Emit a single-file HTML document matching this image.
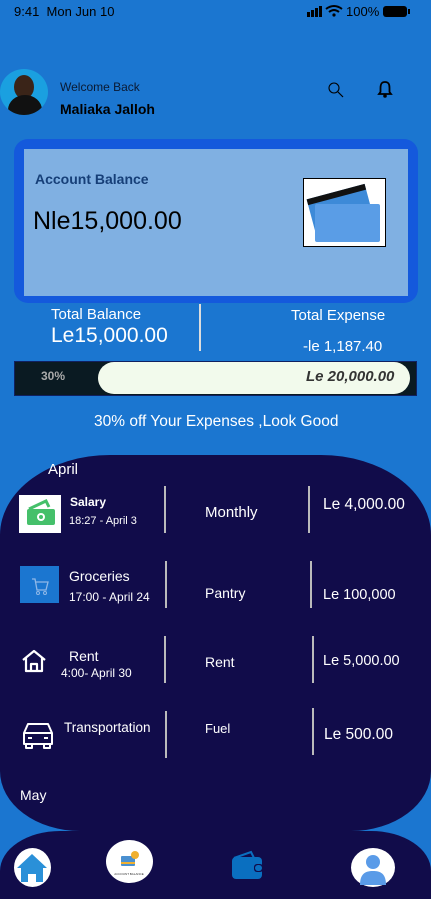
<!DOCTYPE html>
<html><head><meta charset="utf-8"><style>
*{margin:0;padding:0;box-sizing:border-box}
body{width:431px;height:899px;overflow:hidden;background:#1b76d0;font-family:"Liberation Sans",sans-serif;position:relative;color:#fff}
.a{position:absolute;white-space:nowrap}
.vl{position:absolute;width:2px;background:#bbb}
</style></head><body>
<div class="a" style="left:14px;top:4px;font-size:13px;color:#000">9:41&nbsp;&nbsp;Mon Jun 10</div>
<div class="a" style="left:307px;top:3px;width:105px;height:16px">
 <svg width="105" height="16"><rect x="0" y="9" width="3" height="5" fill="#000"/><rect x="4" y="7" width="3" height="7" fill="#000"/><rect x="8" y="5" width="3" height="9" fill="#000"/><rect x="12" y="3" width="3" height="11" fill="#000"/>
 <path d="M19 6 Q27 0 35 6 M22 9 Q27 5 32 9" stroke="#000" stroke-width="2" fill="none"/><circle cx="27" cy="12" r="1.6" fill="#000"/>
 <text x="39" y="13" font-size="13" font-family="Liberation Sans">100%</text>
 <rect x="76" y="3" width="24" height="11" rx="3" fill="#000"/><rect x="101" y="6" width="2" height="5" fill="#000"/></svg>
</div>
<div class="a" style="left:0;top:69px;width:48px;height:46px;border-radius:50%;background:#1aa0e0;overflow:hidden">
 <div style="position:absolute;left:14px;top:6px;width:20px;height:24px;border-radius:50%;background:#3a2418"></div>
 <div style="position:absolute;left:8px;top:26px;width:34px;height:30px;border-radius:50% 50% 0 0;background:#111"></div>
</div>
<div class="a" style="left:60px;top:80px;font-size:12px;color:#0a1a33">Welcome Back</div>
<div class="a" style="left:60px;top:101px;font-size:14px;font-weight:bold;color:#000">Maliaka Jalloh</div>
<svg class="a" style="left:327px;top:81px" width="18" height="18"><circle cx="7" cy="7" r="5" stroke="#000" stroke-width="1.1" fill="none"/><path d="M11 11 L16 16" stroke="#000" stroke-width="1.2"/></svg>
<svg class="a" style="left:377px;top:80px" width="16" height="19"><path d="M8 2 C4 2 3.5 5 3.5 8 L3.5 12 L2 14 L14 14 L12.5 12 L12.5 8 C12.5 5 12 2 8 2Z" stroke="#000" stroke-width="1.8" fill="none"/><circle cx="8" cy="16" r="1.8" fill="#000"/></svg>

<div class="a" style="left:14px;top:139px;width:404px;height:164px;border-radius:14px;background:#1459dc"></div>
<div class="a" style="left:24px;top:149px;width:384px;height:147px;background:#80b0e2"></div>
<div class="a" style="left:35px;top:171px;font-size:14px;font-weight:bold;color:#163f78">Account Balance</div>
<div class="a" style="left:33px;top:207px;font-size:25px;color:#000">Nle15,000.00</div>
<div class="a" style="left:303px;top:178px;width:83px;height:69px;background:#fff;border:1px solid #000">
 <div style="position:absolute;left:6px;top:12px;width:60px;height:34px;background:#3d8ad8;transform:rotate(-15deg);border-top:6px solid #111"></div>
 <div style="position:absolute;left:11px;top:25px;width:65px;height:38px;background:#5a9de6;border-radius:2px"></div>
</div>

<div class="a" style="left:51px;top:306px;font-size:15px">Total Balance</div>
<div class="a" style="left:51px;top:324px;font-size:21px">Le15,000.00</div>
<div class="vl" style="left:199px;top:304px;height:47px;background:#ddd"></div>
<div class="a" style="left:291px;top:307px;font-size:15px">Total Expense</div>
<div class="a" style="left:303px;top:338px;font-size:15px">-le 1,187.40</div>

<div class="a" style="left:14px;top:361px;width:403px;height:35px;background:#0a1a22;border:1px solid #102060"></div>
<div class="a" style="left:41px;top:369px;font-size:12px;font-weight:bold;color:#aaa">30%</div>
<div class="a" style="left:98px;top:362px;width:312px;height:32px;border-radius:16px;background:#f2faec"></div>
<div class="a" style="left:306px;top:368px;font-size:15px;font-weight:bold;font-style:italic;color:#333">Le 20,000.00</div>
<div class="a" style="left:94px;top:413px;font-size:15.5px">30% off Your Expenses ,Look Good</div>

<div class="a" style="left:0;top:455px;width:431px;height:376px;background:#110c4a;border-radius:110px 110px 80px 80px / 80px 80px 60px 60px"></div>
<div class="a" style="left:48px;top:461px;font-size:15px">April</div>

<div class="a" style="left:19px;top:495px;width:42px;height:38px;background:#fff"><svg width="42" height="38"><path d="M10 14 L27 6 L30 12" stroke="#45c06a" stroke-width="3" fill="none"/><rect x="8" y="14" width="28" height="16" rx="2" fill="#45c06a"/><circle cx="22" cy="22" r="4" fill="#fff"/><circle cx="22" cy="22" r="2" fill="#45c06a"/></svg></div>
<div class="a" style="left:70px;top:495px;font-size:12px;font-weight:bold">Salary</div>
<div class="a" style="left:69px;top:515px;font-size:11px">18:27 - April 3</div>
<div class="vl" style="left:164px;top:486px;height:47px"></div>
<div class="a" style="left:205px;top:504px;font-size:15px">Monthly</div>
<div class="vl" style="left:308px;top:486px;height:47px"></div>
<div class="a" style="left:323px;top:496px;font-size:15.5px">Le 4,000.00</div>

<div class="a" style="left:20px;top:566px;width:39px;height:37px;background:#1b76d0"><svg width="39" height="37"><path d="M12 13 L15 13 L17 24 L26 24 L28 16 L16 16" stroke="#8fb8e8" stroke-width="1.3" fill="none"/><circle cx="18" cy="27" r="1.5" stroke="#8fb8e8" fill="none"/><circle cx="25" cy="27" r="1.5" stroke="#8fb8e8" fill="none"/></svg></div>
<div class="a" style="left:69px;top:568px;font-size:14px">Groceries</div>
<div class="a" style="left:69px;top:590px;font-size:12px">17:00 - April 24</div>
<div class="vl" style="left:165px;top:561px;height:47px"></div>
<div class="a" style="left:205px;top:585px;font-size:14px">Pantry</div>
<div class="vl" style="left:310px;top:561px;height:47px"></div>
<div class="a" style="left:323px;top:587px;font-size:14.5px">Le 100,000</div>

<svg class="a" style="left:21px;top:648px" width="26" height="26"><path d="M2 12 L13 3 L24 12 M5 10 L5 23 L21 23 L21 10 M10 23 L10 16 L16 16 L16 23" stroke="#fff" stroke-width="2.2" fill="none" stroke-linejoin="round"/></svg>
<div class="a" style="left:69px;top:648px;font-size:14px">Rent</div>
<div class="a" style="left:61px;top:666px;font-size:12px">4:00- April 30</div>
<div class="vl" style="left:164px;top:636px;height:47px"></div>
<div class="a" style="left:205px;top:654px;font-size:14px">Rent</div>
<div class="vl" style="left:312px;top:636px;height:47px"></div>
<div class="a" style="left:323px;top:653px;font-size:14.5px">Le 5,000.00</div>

<svg class="a" style="left:21px;top:721px" width="34" height="29"><path d="M3 12 L7 3 L27 3 L31 12 Z M3 12 L3 23 L31 23 L31 12 M5 23 L5 27 L11 27 L11 23 M23 23 L23 27 L29 27 L29 23 M7 17 L11 17 M23 17 L27 17" stroke="#fff" stroke-width="2" fill="none" stroke-linejoin="round"/></svg>
<div class="a" style="left:64px;top:720px;font-size:13.5px">Transportation</div>
<div class="vl" style="left:165px;top:711px;height:47px"></div>
<div class="a" style="left:205px;top:721px;font-size:13px">Fuel</div>
<div class="vl" style="left:312px;top:708px;height:47px"></div>
<div class="a" style="left:324px;top:726px;font-size:15.5px">Le 500.00</div>

<div class="a" style="left:20px;top:787px;font-size:14px">May</div>

<div class="a" style="left:0;top:831px;width:431px;height:68px;background:#110c4a;border-radius:60px 60px 0 0 / 40px 40px 0 0"></div>
<div class="a" style="left:14px;top:848px;width:37px;height:39px;border-radius:50%;background:#fff"><svg width="37" height="39"><path d="M3 20 L18 6 L33 20 L29 20 L29 34 L22 34 L22 26 L14 26 L14 34 L7 34 L7 20Z" fill="#2a90d8"/></svg></div>
<div class="a" style="left:106px;top:840px;width:47px;height:43px;border-radius:50%;background:#fff"><svg width="47" height="43"><rect x="15" y="16" width="14" height="10" rx="1" fill="#4a90d0"/><rect x="15" y="22" width="14" height="2" fill="#f0b030"/><circle cx="29" cy="15" r="4" fill="#f0b030"/><text x="23" y="35" font-size="3" text-anchor="middle" fill="#333" font-family="Liberation Sans">ACCOUNT BALANCE</text></svg></div>
<svg class="a" style="left:231px;top:850px" width="32" height="30"><path d="M3 8 L20 2 L23 8" stroke="#0a6fc0" stroke-width="2" fill="none"/><rect x="1" y="7" width="30" height="22" rx="4" fill="#0a6fc0"/><rect x="23" y="14" width="9" height="8" rx="3" fill="#110c4a"/><rect x="24" y="15" width="7" height="6" rx="3" fill="#0a6fc0"/></svg>
<div class="a" style="left:351px;top:848px;width:44px;height:39px;border-radius:50%;background:#fff"><svg width="44" height="39"><circle cx="22" cy="14" r="7" fill="#5a9be8"/><path d="M9 37 C9 26 14 23 22 23 C30 23 35 26 35 37Z" fill="#5a9be8"/></svg></div>
</body></html>
